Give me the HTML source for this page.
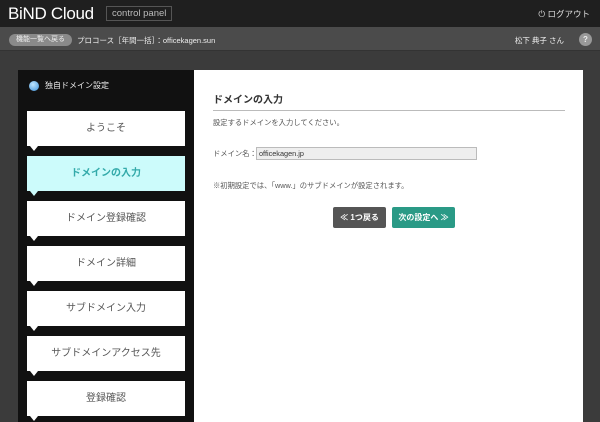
<!DOCTYPE html>
<html><head><meta charset="utf-8"><style>
*{margin:0;padding:0;box-sizing:border-box}
body{width:600px;height:422px;overflow:hidden;background:#3b3b3b;font-family:"Liberation Sans","Noto Sans CJK JP",sans-serif;position:relative}
.top{position:absolute;left:0;top:0;width:600px;height:27px;background:#1f1f1f}
.logo{position:absolute;left:8px;top:4px;color:#fff;font-size:17px;letter-spacing:-0.3px}
.cp{position:absolute;left:106px;top:6px;height:15px;border:1px solid #555;color:#bbb;font-size:9.5px;padding:0 5px;line-height:13px}
.logout{position:absolute;right:10px;top:8px;color:#ddd;font-size:8.5px;padding-left:10px}
.bar{position:absolute;left:0;top:27px;width:600px;height:24px;background:#4b4b4b;border-bottom:1px solid #333}
.back{position:absolute;left:9px;top:7px;height:12px;width:63px;border-radius:6px;background:#8a8a8a;color:#eee;font-size:7px;text-align:center;line-height:12px}
.crumb{position:absolute;left:77px;top:8px;color:#eee;font-size:7.5px}
.user{position:absolute;right:36px;top:8px;color:#eee;font-size:7.5px}
.help{position:absolute;right:8px;top:6px;width:13px;height:13px;border-radius:50%;background:#999;color:#eee;font-size:8px;text-align:center;line-height:13px;font-weight:bold}
.side{position:absolute;left:18px;top:70px;width:176px;height:352px;background:#111}
.sh{position:absolute;left:11px;top:11px;color:#eee;font-size:8px;line-height:10px}
.dot{display:inline-block;width:10px;height:10px;border-radius:50%;background:radial-gradient(circle at 40% 35%,#bfe6ff,#3a8fd8);vertical-align:middle;margin-right:6px}
.item{position:absolute;left:9px;width:158px;height:35px;background:#fff;color:#555;font-size:10px;text-align:center;line-height:35px}
.item:after{content:"";position:absolute;left:3px;bottom:-5px;border-left:4px solid transparent;border-right:4px solid transparent;border-top:5px solid #fff}
.item.act{background:#ccfbfb;color:#3aa;font-weight:bold}
.item.act:after{border-top-color:#ccfbfb}
.main{position:absolute;left:194px;top:70px;width:389px;height:352px;background:#fff}
.h{position:absolute;left:19px;top:21px;width:352px;font-size:10px;font-weight:bold;color:#333;padding-bottom:4px;border-bottom:1px solid #bbb}
.t{position:absolute;left:19px;font-size:7.3px;color:#555}
.inp{position:absolute;left:62px;top:77px;width:221px;height:13px;background:#eee;border:1px solid #bbb;font-size:7.3px;line-height:11px;padding-left:2px;color:#333}
.b{position:absolute;top:137px;height:21px;color:#fff;font-size:8px;font-weight:bold;text-align:center;line-height:21px;border-radius:2px}
</style></head><body>
<div class="top"><div class="logo">BiND Cloud</div><div class="cp">control panel</div><div class="logout">⏻ ログアウト</div></div>
<div class="bar"><div class="back">機能一覧へ戻る</div><div class="crumb">プロコース［年間一括］：officekagen.sun</div><div class="user">松下 典子 さん</div><div class="help">?</div></div>
<div class="side"><div class="sh"><span class="dot"></span>独自ドメイン設定</div>
<div class="item" style="top:41px">ようこそ</div>
<div class="item act" style="top:86px">ドメインの入力</div>
<div class="item" style="top:131px">ドメイン登録確認</div>
<div class="item" style="top:176px">ドメイン詳細</div>
<div class="item" style="top:221px">サブドメイン入力</div>
<div class="item" style="top:266px">サブドメインアクセス先</div>
<div class="item" style="top:311px">登録確認</div>
</div>
<div class="main">
<div class="h">ドメインの入力</div>
<div class="t" style="top:48px">設定するドメインを入力してください。</div>
<div class="t" style="top:79px">ドメイン名：</div>
<div class="inp">officekagen.jp</div>
<div class="t" style="top:111px">※初期設定では、「www.」のサブドメインが設定されます。</div>
<div class="b" style="left:139px;width:53px;background:#555">≪ 1つ戻る</div>
<div class="b" style="left:198px;width:63px;background:#2a9a86">次の設定へ ≫</div>
</div>
</body></html>
